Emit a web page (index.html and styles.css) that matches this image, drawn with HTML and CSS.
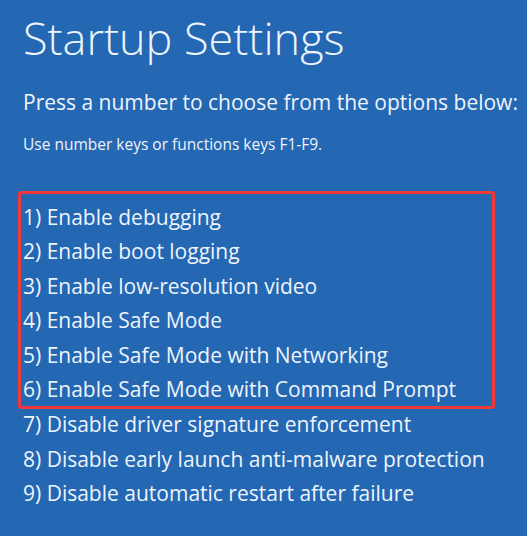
FILE: index.html
```html
<!DOCTYPE html>
<html lang="en">
<head>
    <meta charset="UTF-8">
    <meta name="viewport" content="width=device-width, initial-scale=1.0">
    <title>Startup Settings</title>
    <link rel="stylesheet" href="styles.css">
</head>
<body>
    <div class="screen">
        <h1 class="title">Startup Settings</h1>
        <p class="lead">Press a number to choose from the options below:</p>
        <p class="hint">Use number keys or functions keys F1-F9.</p>

        <div class="options">
            <div class="highlight">
                <div class="option">1) Enable debugging</div>
                <div class="option">2) Enable boot logging</div>
                <div class="option">3) Enable low-resolution video</div>
                <div class="option">4) Enable Safe Mode</div>
                <div class="option">5) Enable Safe Mode with Networking</div>
                <div class="option">6) Enable Safe Mode with Command Prompt</div>
            </div>
            <div class="option">7) Disable driver signature enforcement</div>
            <div class="option">8) Disable early launch anti-malware protection</div>
            <div class="option">9) Disable automatic restart after failure</div>
        </div>
    </div>
</body>
</html>
```

FILE: styles.css
```css
html, body {
    margin: 0;
    padding: 0;
}
body {
    background-color: #2467b3;
    color: #eef4fb;
    font-family: "Open Sans", "Noto Sans", sans-serif;
}
.screen {
    width: 527px;
    height: 536px;
    padding: 0 0 0 23px;
    box-sizing: border-box;
    overflow: hidden;
}
.title {
    margin: 0;
    padding-top: 10px;
    font-size: 45px;
    font-weight: 300;
    line-height: 56px;
}
.lead {
    margin: 22px 0 0;
    font-size: 21px;
    line-height: 28px;
}
.hint {
    margin: 18px 0 0;
    font-size: 15.5px;
    line-height: 20px;
}
.options {
    margin-top: 37px;
}
.highlight {
    margin: 0 0 -2px -5px;
    width: 477px;
    box-sizing: border-box;
    padding: 6px 0 0 2px;
    border: 3px solid #f03a3a;
    border-radius: 3px;
}
.option {
    font-size: 21px;
    line-height: 34.4px;
    white-space: nowrap;
}
```
